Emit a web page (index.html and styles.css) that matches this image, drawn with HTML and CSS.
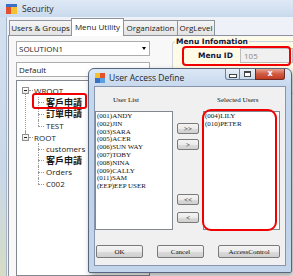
FILE: index.html
```html
<!DOCTYPE html>
<html lang="zh-Hant">
<head>
    <meta charset="UTF-8">
    <meta name="viewport" content="width=device-width, initial-scale=1.0">
    <title>Security</title>
    <link rel="stylesheet" href="styles.css">
</head>
<body>
    <div class="window">
        <div class="titlebar">
            <svg class="app-icon" width="11" height="10" viewBox="0 0 11 10">
                <rect x="0" y="0" width="11" height="3" fill="#3a6fc4"/>
                <rect x="0" y="3" width="5" height="7" fill="#e2502c"/>
                <rect x="5" y="3" width="6" height="7" fill="#f1c232"/>
            </svg>
            <span>Security</span>
        </div>
        <div class="window-body">
            <div class="frame-left"></div>
            <div class="tab-control">
                <div class="tab-strip">
                    <div class="tab w1">Users &amp; Groups</div>
                    <div class="tab active w2">Menu Utility</div>
                    <div class="tab w3">Organization</div>
                    <div class="tab w4">OrgLevel</div>
                </div>
                <div class="tab-page">
                    <div class="menu-col">
                        <div class="combo"><span>SOLUTION1</span><i class="arrow"></i></div>
                        <div class="combo second"><span>Default</span><i class="arrow"></i></div>
                        <div class="tree">
                            <ul class="roots">
                                <li>
                                    <div class="node"><span class="exp"></span><span class="stub"></span>WROOT</div>
                                    <ul class="children">
                                        <li class="cjk">客戶申請</li>
                                        <li class="cjk">訂單申請</li>
                                        <li>TEST</li>
                                    </ul>
                                </li>
                                <li>
                                    <div class="node"><span class="exp"></span><span class="stub"></span>ROOT</div>
                                    <ul class="children">
                                        <li>customers</li>
                                        <li class="cjk">客戶申請</li>
                                        <li>Orders</li>
                                        <li>C002</li>
                                    </ul>
                                </li>
                            </ul>
                        </div>
                    </div>
                    <div class="info-area">
                        <fieldset class="info-group">
                            <legend>Menu Infomation</legend>
                            <div class="info-row">
                                <label>Menu ID</label>
                                <div class="textbox">105</div>
                            </div>
                        </fieldset>
                    </div>
                </div>
            </div>
        </div>
    </div>

    <!-- User Access Define dialog -->
    <div class="dialog">
        <div class="dlg-title">
            <svg class="dlg-icon" width="10" height="10" viewBox="0 0 10 10">
                <rect x="0" y="0" width="5" height="5" fill="#f1c232"/>
                <rect x="5" y="0" width="5" height="5" fill="#e2502c"/>
                <rect x="0" y="5" width="5" height="5" fill="#3a6fc4"/>
                <rect x="5" y="5" width="5" height="5" fill="#5aa0e0"/>
            </svg>
            <span>User Access Define</span>
            <div class="caption-buttons">
                <div class="cap-btn min"><i></i></div>
                <div class="cap-btn max"><i></i></div>
                <div class="cap-btn close">x</div>
            </div>
        </div>
        <div class="dlg-client">
            <div class="pick-grid">
                <div class="col-label user-label">User List</div>
                <div></div>
                <div class="col-label sel-label">Selected Users</div>
                <div class="listbox">
                    <div>(001)ANDY</div>
                    <div>(002)JIN</div>
                    <div>(003)SARA</div>
                    <div>(005)ACER</div>
                    <div>(006)SUN WAY</div>
                    <div>(007)TOBY</div>
                    <div>(008)NINA</div>
                    <div>(009)CALLY</div>
                    <div>(011)SAM</div>
                    <div>(EEP)EEP USER</div>
                </div>
                <div class="move-col">
                    <button class="btn move first">&gt;&gt;</button>
                    <button class="btn move">&gt;</button>
                    <button class="btn move back">&lt;&lt;</button>
                    <button class="btn move last">&lt;</button>
                </div>
                <div class="listbox">
                    <div>(004)LILY</div>
                    <div>(010)PETER</div>
                </div>
            </div>
            <div class="dlg-actions">
                <button class="btn action">OK</button>
                <button class="btn action">Cancel</button>
                <button class="btn action wide">AccessControl</button>
            </div>
        </div>
    </div>

    <!-- red highlight marks -->
    <div class="mark mark-tree"></div>
    <div class="mark mark-id"></div>
    <div class="mark mark-selected"></div>
</body>
</html>
```

FILE: styles.css
```css
body {
    margin: 0;
    width: 293px;
    height: 276px;
    overflow: hidden;
    position: relative;
    background-color: #f0f0f0;
    font-family: "Open Sans", "Noto Sans CJK TC", sans-serif;
    font-size: 8px;
    color: #1a1a1a;
}
.window {
    display: flex;
    flex-direction: column;
    height: 276px;
}
.titlebar {
    height: 17px;
    display: flex;
    align-items: center;
    padding-left: 6px;
    background: linear-gradient(#dfe9f5, #c9daee);
    color: #2b2b2b;
    font-size: 8.5px;
}
.app-icon {
    margin-right: 5px;
}
.window-body {
    flex: 1;
    display: flex;
    background-color: #eef2f8;
}
.frame-left {
    flex: none;
    width: 6px;
    background: linear-gradient(#d3e0f0, #c9d8e9 60%, #d6dcc4);
    border-right: 1px solid #a7b6c9;
}
.tab-control {
    flex: 1;
    min-width: 0;
    display: flex;
    flex-direction: column;
    margin-left: 1px;
}
.tab-strip {
    height: 18px;
    display: flex;
    align-items: flex-end;
    padding-left: 1px;
}
.tab {
    height: 14px;
    line-height: 14px;
    text-align: center;
    border: 1px solid #8e939c;
    border-bottom: none;
    margin-right: -1px;
    background: linear-gradient(#f5f5f5, #e3e3e3);
    white-space: nowrap;
}
.tab.active {
    height: 17px;
    line-height: 15px;
    background: #fff;
    position: relative;
    z-index: 1;
    margin-bottom: -1px;
}
.w1 { width: 61px; }
.w2 { width: 51px; }
.w3 { width: 53px; }
.w4 { width: 36px; }
.tab-page {
    flex: 1;
    display: flex;
    align-items: flex-start;
    overflow: hidden;
    background-color: #f8f8f8;
    border-top: 1px solid #8e939c;
    border-left: 1px solid #8e939c;
    padding: 5px 0 0 7px;
}
.menu-col {
    width: 134px;
    height: 100%;
    flex: none;
    display: flex;
    flex-direction: column;
}
.combo {
    height: 13px;
    display: flex;
    align-items: center;
    justify-content: space-between;
    padding: 0 3px 0 2px;
    background: #fff;
    border: 1px solid #adadad;
}
.combo.second {
    margin-top: 6px;
}
.arrow {
    width: 0;
    height: 0;
    border-left: 2.5px solid transparent;
    border-right: 2.5px solid transparent;
    border-top: 3px solid #000;
}
.tree {
    flex: 1;
    margin-top: 3px;
    background: #fff;
    border: 1px solid #828790;
    padding: 4px 0 0 0;
}
.tree ul {
    list-style: none;
    margin: 0;
    padding: 0;
}
.roots > li {
    position: relative;
}
.roots > li:first-child::before {
    content: '';
    position: absolute;
    left: 8px;
    top: 9px;
    bottom: 0;
    border-left: 1px dotted #9a9a9a;
}
.roots > li:last-child::before {
    content: '';
    position: absolute;
    left: 8px;
    top: 0;
    height: 2px;
    border-left: 1px dotted #9a9a9a;
}
.node {
    height: 11.6px;
    display: flex;
    align-items: center;
    padding-left: 5px;
    white-space: nowrap;
}
.exp {
    width: 5px;
    height: 5px;
    border: 1px solid #8f8f8f;
    background: linear-gradient(#fff, #e6e6e6);
    position: relative;
}
.exp::after {
    content: '';
    position: absolute;
    left: 1px;
    top: 2px;
    width: 3px;
    height: 1px;
    background: #222;
}
.stub {
    width: 4px;
    border-top: 1px dotted #9a9a9a;
    margin-right: 1px;
}
.children li {
    position: relative;
    height: 11.6px;
    line-height: 11.6px;
    padding-left: 29px;
    white-space: nowrap;
}
.children li::before {
    content: '';
    position: absolute;
    left: 21px;
    top: 0;
    height: 100%;
    border-left: 1px dotted #9a9a9a;
}
.children li:last-child::before {
    height: 50%;
}
.children li::after {
    content: '';
    position: absolute;
    left: 21px;
    top: 50%;
    width: 6px;
    border-top: 1px dotted #9a9a9a;
}
.children li.cjk {
    font-family: "Noto Sans CJK TC", sans-serif;
    font-size: 9px;
    font-weight: bold;
}
.info-area {
    flex: none;
    width: 135px;
    height: 40px;
    margin-left: 22px;
    margin-top: -4px;
    background: #fffbe6;
    border-radius: 4px 0 0 0;
}
.info-group {
    margin: 0;
    padding: 2px 0 30px 0;
    border: 1px solid #cbd4dd;
    border-right: none;
    border-radius: 4px 0 0 4px;
}
.info-group legend {
    font-family: "DejaVu Sans", sans-serif;
    font-weight: bold;
    font-size: 7.5px;
    line-height: 9px;
    color: #14143a;
    padding: 0 1px;
    margin-left: 2px;
}
.info-row {
    display: flex;
    align-items: center;
    padding-left: 25px;
    white-space: nowrap;
}
.info-row label {
    flex: none;
    width: 34px;
    font-family: "DejaVu Sans", sans-serif;
    font-weight: bold;
    font-size: 7.5px;
    color: #14143a;
    margin-right: 8px;
}
.textbox {
    flex: none;
    width: 48px;
    height: 13px;
    line-height: 13px;
    padding-left: 3px;
    background: #f0f0f0;
    border: 1px solid #bdbdbd;
    color: #8a8a8a;
}

/* dialog */
.dialog {
    position: absolute;
    left: 88px;
    top: 68px;
    width: 204px;
    height: 205px;
    box-sizing: border-box;
    display: flex;
    flex-direction: column;
    border: 1px solid #56667e;
    border-radius: 6px 6px 2px 2px;
    background: linear-gradient(#dbe7f5, #c6d8ee 18px, #bed2ea 60%, #c3d5ea);
    box-shadow: 2px 3px 6px rgba(0, 0, 0, 0.35);
}
.dlg-title {
    height: 17px;
    display: flex;
    align-items: center;
    padding-left: 6px;
    font-size: 8.5px;
    color: #1f1f1f;
}
.dlg-icon {
    margin-right: 4px;
}
.caption-buttons {
    display: flex;
    align-self: flex-start;
    margin-left: auto;
    margin-right: 6px;
}
.cap-btn {
    height: 10px;
    border: 1px solid #6d7f99;
    border-top: none;
    background: linear-gradient(#eaf1f9, #c9d8ea);
    display: flex;
    align-items: center;
    justify-content: center;
    margin-left: -1px;
}
.cap-btn.min {
    width: 13px;
    border-radius: 0 0 0 3px;
}
.cap-btn.min i {
    width: 6px;
    height: 2px;
    margin-top: 3px;
    border: 1px solid #444;
    background: #fff;
}
.cap-btn.max {
    width: 15px;
}
.cap-btn.max i {
    width: 5px;
    height: 3px;
    border: 1px solid #444;
    border-top-width: 2px;
    background: #fff;
}
.cap-btn.close {
    width: 28px;
    border-radius: 0 0 3px 0;
    border-color: #6b2a22;
    background: linear-gradient(#e9a291, #cf5a42 50%, #c23b22);
    color: #fff;
    font-family: "DejaVu Sans", sans-serif;
    font-weight: bold;
    font-size: 8px;
    line-height: 10px;
}
.dlg-client {
    height: 180px;
    box-sizing: border-box;
    margin: 0 5px;
    background: #f0f0f0;
    border: 1px solid #8796ad;
    font-family: "Liberation Serif", serif;
    font-size: 7px;
    color: #111;
}
.pick-grid {
    display: grid;
    grid-template-columns: 78px 22px 77px;
    grid-template-rows: 24px 119px;
    column-gap: 4px;
}
.col-label {
    padding-top: 9px;
    line-height: 8px;
}
.user-label {
    padding-left: 18px;
}
.sel-label {
    padding-left: 14px;
}
.listbox {
    background: #fff;
    border: 1px solid #828790;
    padding: 1px 0 0 1px;
    line-height: 7.8px;
    white-space: nowrap;
}
.move-col {
    display: flex;
    flex-direction: column;
}
.btn {
    font-family: "Liberation Serif", serif;
    font-size: 7px;
    color: #111;
    padding: 0;
    border: 1px solid #7a7a7a;
    border-radius: 2px;
    background: linear-gradient(#f4f4f4, #ebebeb 50%, #dcdcdc 51%, #cfcfcf);
}
.btn.move {
    height: 11px;
    line-height: 8px;
    margin-top: 5px;
}
.btn.move.first {
    margin-top: 12px;
}
.btn.move.back {
    margin-top: 44px;
}
.btn.move.last {
    margin-top: 7px;
}
.dlg-actions {
    display: flex;
    justify-content: space-between;
    width: 185px;
    box-sizing: border-box;
    padding-left: 1px;
    margin-top: 15px;
}
.btn.action {
    width: 47px;
    height: 13px;
}
.btn.action.wide {
    width: 62px;
}

/* red highlight marks */
.mark {
    position: absolute;
    border: 2px solid #f20000;
    box-sizing: border-box;
}
.mark-tree {
    left: 32px;
    top: 93px;
    width: 55px;
    height: 16px;
    border-radius: 3px;
}
.mark-id {
    left: 182px;
    top: 46px;
    width: 109px;
    height: 20px;
    border-radius: 4px;
}
.mark-selected {
    left: 202px;
    top: 109px;
    width: 75px;
    height: 122px;
    border-radius: 9px;
}
```
